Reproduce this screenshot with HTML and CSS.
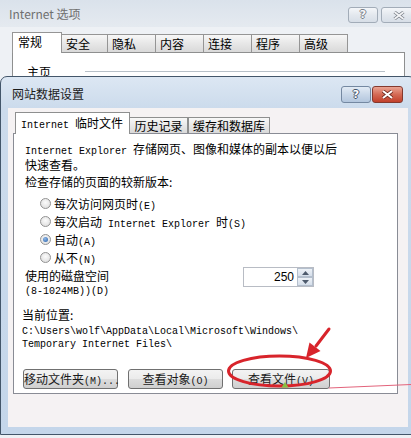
FILE: index.html
```html
<!DOCTYPE html>
<html lang="zh-CN">
<head>
<meta charset="utf-8">
<title>网站数据设置</title>
<link rel="stylesheet" href="styles.css">
</head>
<body>
<div class="win-outer">
  <div class="outer-title">
    <span class="outer-caption">Internet 选项</span>
    <div class="caps-outer">
      <span class="cap cap-help"><span class="q q-off">?</span></span>
      <span class="cap cap-close">
        <svg width="12" height="9" viewBox="0 0 12 9"><path d="M1.5 1 L10.5 8 M10.5 1 L1.5 8" stroke="#7b818a" stroke-width="3.2" fill="none"/><path d="M1.5 1 L10.5 8 M10.5 1 L1.5 8" stroke="#f4f5f7" stroke-width="1.6" fill="none"/></svg>
      </span>
    </div>
  </div>
  <div class="outer-body">
    <div class="otabs">
      <span class="otab active">常规</span>
      <span class="otab">安全</span>
      <span class="otab">隐私</span>
      <span class="otab">内容</span>
      <span class="otab">连接</span>
      <span class="otab">程序</span>
      <span class="otab">高级</span>
    </div>
    <div class="opanel">
      <div class="home-row"><span>主页</span><span class="hline"></span></div>
    </div>
  </div>
</div>

<div class="dialog">
  <div class="dlg-title">
    <span class="dlg-caption">网站数据设置</span>
    <div class="caps-inner">
      <span class="cap2 help"><span class="q q-on">?</span></span>
      <span class="cap2 close">
        <svg width="13" height="9" viewBox="0 0 13 9"><path d="M2 1 L11 8 M11 1 L2 8" stroke="#6e2a20" stroke-width="3.6" fill="none"/><path d="M2 1 L11 8 M11 1 L2 8" stroke="#ffffff" stroke-width="2" fill="none"/></svg>
      </span>
    </div>
  </div>
  <div class="dlg-body">
    <div class="itabs">
      <span class="itab active"><span class="en">Internet </span>临时文件</span>
      <span class="itab t2">历史记录</span>
      <span class="itab t3">缓存和数据库</span>
    </div>
    <div class="ipanel">
      <p class="desc"><span class="en">Internet Explorer </span>存储网页、图像和媒体的副本以便以后<br>快速查看。</p>
      <p class="check-label">检查存储的页面的较新版本:</p>
      <div class="radios">
        <div class="radio-row"><span class="radio"></span><span>每次访问网页时<span class="en">(E)</span></span></div>
        <div class="radio-row"><span class="radio"></span><span>每次启动<span class="en"> Internet Explorer </span>时<span class="en">(S)</span></span></div>
        <div class="radio-row"><span class="radio checked"></span><span>自动<span class="en">(A)</span></span></div>
        <div class="radio-row"><span class="radio"></span><span>从不<span class="en">(N)</span></span></div>
      </div>
      <div class="disk-row">
        <div class="disk-label">使用的磁盘空间<br><span class="en">(8-1024MB))(D)</span></div>
        <div class="spin">
          <span class="spin-val">250</span>
          <span class="spin-btns">
            <span class="spin-b"><svg width="7" height="4" viewBox="0 0 7 4"><path d="M0 4 L3.5 0 L7 4 Z" fill="#4d5a6c"/></svg></span>
            <span class="spin-b"><svg width="7" height="4" viewBox="0 0 7 4"><path d="M0 0 L3.5 4 L7 0 Z" fill="#4d5a6c"/></svg></span>
          </span>
        </div>
      </div>
      <p class="loc">当前位置:</p>
      <p class="paths">C:\Users\wolf\AppData\Local\Microsoft\Windows\<br>Temporary Internet Files\</p>
      <div class="btns">
        <span class="btn b1">移动文件夹<span class="en">(M)...</span></span>
        <span class="btn b2">查看对象<span class="en">(O)</span></span>
        <span class="btn b3">查看文件<span class="en">(V)</span></span>
      </div>
    </div>
  </div>
</div>

<svg class="annot" width="411" height="438" viewBox="0 0 411 438">
  <path d="M329 388 L411 384.5" stroke="#e2637b" stroke-width="1" fill="none"/>
  <ellipse cx="279.5" cy="371" rx="51" ry="15" fill="none" stroke="#d8242b" stroke-width="3"/>
  <polygon points="281.5,387.5 288.5,387.5 285,382" fill="#86c043"/>
  <path d="M329 329 L316 346" stroke="#d8242b" stroke-width="3" stroke-linecap="round" fill="none"/>
  <polygon points="306,358 309.5,342.5 320.5,351" fill="#d8242b"/>
</svg>
</body>
</html>
```

FILE: styles.css
```css
* { box-sizing: border-box; }
html, body { margin: 0; padding: 0; }
body {
  width: 411px;
  height: 438px;
  overflow: hidden;
  position: relative;
  background: #eef1f5;
  font-family: "Noto Sans CJK SC", "Noto Sans", sans-serif;
  font-size: 12px;
  color: #000;
}
p { margin: 0; }
.en { font-family: "Liberation Mono", monospace; font-size: 10px; white-space: pre; }

/* ---------- outer window ---------- */
.win-outer { height: 438px; background: #eef1f5; }
.outer-title {
  height: 27px;
  display: flex;
  align-items: flex-start;
  background: linear-gradient(#dae2eb, #e5eaf0);
}
.outer-caption {
  padding: 6px 0 0 9px;
  line-height: 16px;
  color: #6f6f6f;
}
.caps-outer {
  margin-left: auto;
  margin-top: 7px;
  margin-right: -5px;
  display: flex;
  gap: 3px;
}
.cap {
  height: 16px;
  border: 1px solid #a2acb8;
  border-radius: 3px;
  background: linear-gradient(#f4f6f9, #e3e8ee 50%, #d7dee7);
  display: flex;
  align-items: center;
  justify-content: center;
}
.cap-help { width: 30px; }
.cap-close { width: 35px; justify-content: flex-start; padding-left: 11px; }
.q {
  font-family: "DejaVu Sans", sans-serif;
  font-weight: bold;
  font-size: 11px;
  line-height: 12px;
}
.q-off {
  color: #f6f7f9;
  text-shadow: 1px 0 0 #7b818a, -1px 0 0 #7b818a, 0 1px 0 #7b818a, 0 -1px 0 #7b818a;
}
.q-on {
  color: #ffffff;
  text-shadow: 1px 0 0 #45556a, -1px 0 0 #45556a, 0 1px 0 #45556a, 0 -1px 0 #45556a;
}

.outer-body { padding: 5px 6px 0 12px; }
.otabs {
  display: flex;
  align-items: flex-end;
  height: 20px;
  position: relative;
  z-index: 1;
}
.otab {
  height: 18px;
  width: 48px;
  padding-left: 4px;
  border-top: 1px solid #959595;
  border-right: 1px solid #959595;
  background: linear-gradient(#f7f7f7, #e7e7e7 50%, #d9d9d9);
  line-height: 17px;
}
.otab:nth-child(2) { width: 46px; }
.otab.active {
  width: 50px;
  height: 21px;
  margin-bottom: -1px;
  padding-left: 5px;
  background: #fff;
  border-left: 1px solid #959595;
  line-height: 17px;
}
.opanel {
  background: #fff;
  border: 1px solid #8e8f8f;
  height: 60px;
  padding: 11px 0 0 14px;
}
.home-row { display: flex; align-items: center; line-height: 16px; }
.hline {
  display: block;
  margin-left: 34px;
  width: 300px;
  border-top: 1px solid #b7c0c8;
  margin-top: -2px;
}

/* ---------- dialog ---------- */
.dialog {
  position: absolute;
  left: 0;
  top: 76px;
  width: 416px;
  height: 359px;
  border: 1px solid #43566a;
  border-radius: 7px 7px 0 0;
  background: linear-gradient(#dce7f3, #ccdbec 31px, #c4d6ea);
  display: flex;
  flex-direction: column;
}
.dlg-title {
  height: 31px;
  display: flex;
  align-items: flex-start;
}
.dlg-caption {
  padding: 10px 0 0 11px;
  line-height: 14px;
  color: #1b1b1b;
}
.caps-inner {
  margin-left: auto;
  margin-top: 9px;
  margin-right: 12px;
  display: flex;
  gap: 1px;
}
.cap2 {
  height: 17px;
  border-radius: 3px;
  display: flex;
  align-items: center;
  justify-content: center;
}
.cap2.help {
  width: 30px;
  border: 1px solid #7488a1;
  background: linear-gradient(#e2ebf5, #c9d7e8 50%, #b3c6dd);
}
.cap2.close {
  width: 31px;
  border: 1px solid #84392e;
  background: linear-gradient(#eaa392, #d46a55 50%, #c2402b);
}

.dlg-body {
  margin: 0 7px;
  height: 319px;
  background: #f5f2f3;
  padding: 4px 10px 0 5px;
}
.itabs {
  display: flex;
  align-items: flex-end;
  height: 21px;
  margin-left: 2px;
  position: relative;
  z-index: 1;
}
.itab {
  height: 16px;
  border-top: 1px solid #8e8f8f;
  border-right: 1px solid #8e8f8f;
  background: linear-gradient(#f8f8f8, #e8e8e8 50%, #d9d9d9);
  line-height: 15px;
  text-align: center;
}
.itab.active {
  width: 115px;
  height: 22px;
  margin-bottom: -1px;
  background: #fff;
  border-left: 1px solid #8e8f8f;
  padding-left: 5px;
  text-align: left;
  line-height: 20px;
}
.itab.t2 { width: 58px; }
.itab.t3 { width: 82px; border-left: 1px solid #8e8f8f; }

.ipanel {
  height: 261px;
  border: 1px solid #898c95;
  background: #fff;
  padding: 8px 0 0 11px;
}
.desc { line-height: 13px; }
.check-label { margin-top: 4px; line-height: 14px; }
.radios { margin-top: 5px; padding-left: 15px; }
.radio-row {
  height: 18px;
  display: flex;
  align-items: center;
  gap: 3px;
}
.radio {
  width: 11px;
  height: 11px;
  border-radius: 50%;
  border: 1px solid #929292;
  background: radial-gradient(circle at 50% 40%, #fbfbfb, #d9d9d9);
  display: flex;
  align-items: center;
  justify-content: center;
}
.radio.checked::after {
  content: "";
  width: 5px;
  height: 5px;
  border-radius: 50%;
  background: radial-gradient(circle at 40% 35%, #8fb8e8, #2860a8);
}

.disk-row { display: flex; margin-top: 3px; }
.disk-label { width: 218px; line-height: 13px; }
.spin {
  margin-top: -2px;
  width: 71px;
  height: 20px;
  border: 1px solid #b8bcc4;
  background: #fff;
  display: flex;
}
.spin-val {
  flex: 1;
  text-align: right;
  padding-right: 3px;
  font-family: "Liberation Sans", sans-serif;
  font-size: 12px;
  line-height: 18px;
}
.spin-btns { width: 16px; display: flex; flex-direction: column; }
.spin-b {
  flex: 1;
  display: flex;
  align-items: center;
  justify-content: center;
  border: 1px solid #b4bfcd;
  background: linear-gradient(#eef2f7, #d5deea);
}

.loc { margin: 11px 0 0 -3px; line-height: 12px; }
.paths {
  margin: 4px 0 0 -3px;
  line-height: 13px;
  font-family: "Liberation Mono", monospace;
  font-size: 10px;
}
.btns { display: flex; margin: 18px 0 0 -2px; }
.btn {
  height: 20px;
  border: 1px solid #707070;
  border-radius: 3px;
  background: linear-gradient(#f3f3f3 0, #ebebeb 50%, #dddddd 50%, #cfcfcf 100%);
  line-height: 18px;
  text-align: center;
  white-space: nowrap;
  color: #1a1a1a;
}
.b1 { width: 95px; text-align: left; }
.b2 { width: 95px; margin-left: 10px; }
.b3 { width: 98px; margin-left: 9px; }

.annot {
  position: absolute;
  left: 0;
  top: 0;
  z-index: 10;
  pointer-events: none;
}
```
